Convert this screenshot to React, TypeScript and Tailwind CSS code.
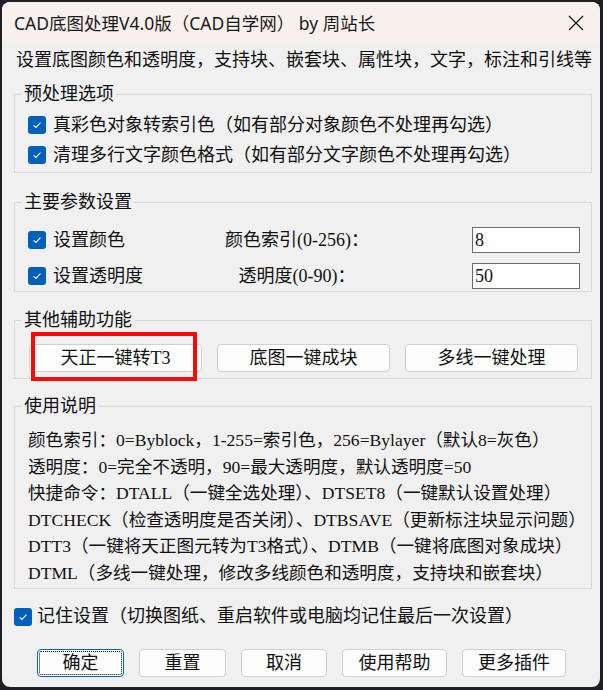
import React from 'react'

function Check() {
  return (
    <span className="w-[18px] h-[18px] rounded-[3px] bg-[#005fb8] flex items-center justify-center shrink-0">
      <svg width="12" height="12" viewBox="0 0 12 12">
        <path d="M2.6 6.3 L4.9 8.5 L9.5 3.7" fill="none" stroke="#ffffff" strokeWidth="1.1" />
      </svg>
    </span>
  )
}

function Group({ title, className = '', children }: { title: string; className?: string; children: React.ReactNode }) {
  return (
    <fieldset className={`ml-[12px] w-[578px] border border-[#d9d9d9] ${className}`}>
      <legend className="ml-[7px] px-[2px] leading-[24px] text-[18px]">{title}</legend>
      {children}
    </fieldset>
  )
}

const USAGE = [
  '颜色索引：0=Byblock，1-255=索引色，256=Bylayer（默认8=灰色）',
  '透明度：0=完全不透明，90=最大透明度，默认透明度=50',
  '快捷命令：DTALL（一键全选处理）、DTSET8（一键默认设置处理）',
  'DTCHECK（检查透明度是否关闭）、DTBSAVE（更新标注块显示问题）',
  'DTT3（一键将天正图元转为T3格式）、DTMB（一键将底图对象成块）',
  'DTML（多线一键处理，修改多线颜色和透明度，支持块和嵌套块）',
]

const FOOTER = [
  { label: '确定', w: 'w-[87px]', focus: true },
  { label: '重置', w: 'w-[87px]' },
  { label: '取消', w: 'w-[86px]' },
  { label: '使用帮助', w: 'w-[105px]' },
  { label: '更多插件', w: 'w-[104px]' },
]

export default function App() {
  return (
    <div className="w-[603px] h-[690px] bg-[#1d1f24] pt-[2px] pl-[2px] overflow-hidden [font-family:'Liberation_Serif','Noto_Sans_CJK_SC',serif] text-[#111]">
      <div className="w-[598px] h-[685px] rounded-[8px] overflow-hidden bg-[#f0f0f0] flex flex-col">
        {/* title bar */}
        <div className="h-[42px] shrink-0 bg-[#f8f0ec] flex items-center justify-between pl-[12px] pr-[16px]">
          <span className="text-[17.5px] text-[#1a1a1a] [font-family:'Noto_Sans','Noto_Sans_CJK_SC',sans-serif]">
            CAD底图处理V4.0版（CAD自学网） by 周站长
          </span>
          <svg width="16" height="16" viewBox="0 0 16 16">
            <path d="M1 1 L15 15 M15 1 L1 15" stroke="#1a1a1a" strokeWidth="1.3" />
          </svg>
        </div>

        <div className="mt-[3px] pl-[14px] h-[26px] leading-[26px] text-[18px] whitespace-nowrap">
          设置底图颜色和透明度，支持块、嵌套块、属性块，文字，标注和引线等
        </div>

        {/* 预处理选项 */}
        <Group title="预处理选项" className="mt-[9px]">
          <div className="pt-[4px] pb-[2px] pl-[13px] text-[18px]">
            <div className="h-[30px] flex items-center gap-[7px]">
              <Check />
              <span>真彩色对象转索引色（如有部分对象颜色不处理再勾选）</span>
            </div>
            <div className="h-[30px] flex items-center gap-[7px]">
              <Check />
              <span>清理多行文字颜色格式（如有部分文字颜色不处理再勾选）</span>
            </div>
          </div>
        </Group>

        {/* 主要参数设置 */}
        <Group title="主要参数设置" className="mt-[17px]">
          <div className="pt-[13px] pb-[2px] pl-[13px] pr-[11px] text-[18px] flex flex-col gap-[10px]">
            <div className="h-[26px] flex items-center">
              <div className="w-[170px] flex items-center gap-[7px]">
                <Check />
                <span>设置颜色</span>
              </div>
              <div className="w-[198px] text-center">颜色索引(0-256)：</div>
              <div className="ml-auto w-[108px] h-[26px] bg-white border border-[#6a6a6a] pl-[2px] leading-[24px]">8</div>
            </div>
            <div className="h-[26px] flex items-center">
              <div className="w-[170px] flex items-center gap-[7px]">
                <Check />
                <span>设置透明度</span>
              </div>
              <div className="w-[198px] text-center">透明度(0-90)：</div>
              <div className="ml-auto w-[108px] h-[26px] bg-white border border-[#6a6a6a] pl-[2px] leading-[24px]">50</div>
            </div>
          </div>
        </Group>

        {/* 其他辅助功能 */}
        <Group title="其他辅助功能" className="mt-[16px]">
          <div className="pt-[12px] pb-[6px] pl-[14px] flex gap-[15px] text-[18px]">
            <div className="relative">
              <button className="w-[173px] h-[28px] bg-[#fdfdfd] border border-[#d0d0d0] rounded-[4px] leading-[26px]">
                天正一键转T3
              </button>
              <div className="absolute left-[2px] top-[-12px] w-[166px] h-[49px] border-[4px] border-[#f50a0a]" />
            </div>
            <button className="w-[173px] h-[28px] bg-[#fdfdfd] border border-[#d0d0d0] rounded-[4px] leading-[26px]">
              底图一键成块
            </button>
            <button className="w-[173px] h-[28px] bg-[#fdfdfd] border border-[#d0d0d0] rounded-[4px] leading-[26px]">
              多线一键处理
            </button>
          </div>
        </Group>

        {/* 使用说明 */}
        <Group title="使用说明" className="mt-[15px]">
          <div className="pt-[9px] pb-[1px] pl-[13px] text-[17.6px] leading-[26.6px] whitespace-nowrap">
            {USAGE.map((line) => (
              <div key={line}>{line}</div>
            ))}
          </div>
        </Group>

        <div className="mt-[15px] ml-[12px] h-[26px] flex items-center gap-[5px] text-[18px]">
          <Check />
          <span>记住设置（切换图纸、重启软件或电脑均记住最后一次设置）</span>
        </div>

        <div className="mt-[19px] pl-[35px] flex gap-[15px] text-[18px]">
          {FOOTER.map((b) => (
            <button
              key={b.label}
              className={`${b.w} h-[28px] bg-[#fdfdfd] rounded-[4px] leading-[26px] border ${
                b.focus
                  ? 'border-[#0067c0] outline-1 outline-dotted outline-black outline-offset-[-3px]'
                  : 'border-[#d0d0d0]'
              }`}
            >
              {b.label}
            </button>
          ))}
        </div>
      </div>
    </div>
  )
}
